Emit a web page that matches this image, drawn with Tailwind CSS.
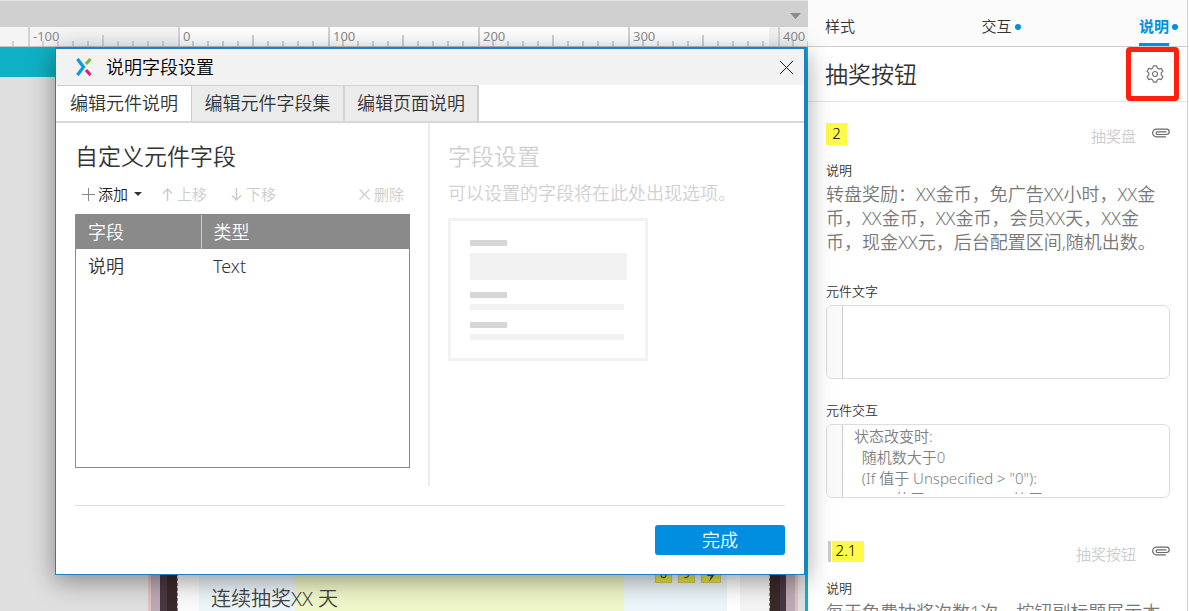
<!DOCTYPE html>
<html lang="zh-CN">
<head>
<meta charset="utf-8">
<title>说明字段设置</title>
<script src="https://cdn.jsdelivr.net/npm/@tailwindcss/browser@4"></script>
</head>
<body class="font-['Noto_Sans','Noto_Sans_CJK_SC',sans-serif] font-[350] text-[#333]">
<svg width="0" height="0" class="absolute">
  <defs>
    <g id="ticks" stroke="#d2d2d2" stroke-width="2">
      <path d="M1 0V19" />
      <path d="M15 14V19M30 14V19M45 14V19M60 14V19M75 8V19M90 14V19M105 14V19M120 14V19M135 14V19" />
    </g>
    <g id="clip" fill="none" stroke="#6a6a6a" stroke-width="1.2" stroke-linecap="round">
      <path d="M13.500 8.800H4.500a3.800 3.800 0 0 1 0-7.700h10a2.700 2.700 0 0 1 0 5.400H5.500a1.300 1.300 0 0 1 0-2.700H14" />
    </g>
  </defs>
</svg>
<div class="relative flex h-screen overflow-hidden bg-white">
  <!-- Workspace -->
  <main class="relative flex min-w-0 flex-1 flex-col">
    <div class="flex h-[27px] items-center justify-end border-t border-[#e4e4e4] bg-[#d0d0d0] pt-1 pr-[7px]">
      <button type="button" aria-label="更多页面" class="block"><svg width="11" height="6"><path d="M0 0H11L5.500 6Z" fill="#8a8a8a"/></svg></button>
    </div>
    <div class="flex h-5 overflow-hidden border-b border-[#c4c4c4] text-[13px] leading-[18px] font-normal text-[#8c8c8c]">
      <div class="relative -ml-[122px] w-[150px] shrink-0 bg-[#f4f4f4]"><svg class="block" width="150" height="19"><use href="#ticks"/></svg></div>
      <div class="relative w-[150px] shrink-0 bg-[#f4f4f4]"><svg class="block" width="150" height="19"><use href="#ticks"/></svg><span class="absolute top-0 left-[5px]">-100</span></div>
      <div class="relative w-[150px] shrink-0 bg-white"><svg class="block" width="150" height="19"><use href="#ticks"/></svg><span class="absolute top-0 left-[5px]">0</span></div>
      <div class="relative w-[150px] shrink-0 bg-white"><svg class="block" width="150" height="19"><use href="#ticks"/></svg><span class="absolute top-0 left-[5px]">100</span></div>
      <div class="relative w-[150px] shrink-0 bg-white"><svg class="block" width="150" height="19"><use href="#ticks"/></svg><span class="absolute top-0 left-[5px]">200</span></div>
      <div class="relative w-[150px] shrink-0 bg-linear-to-r from-white from-94% to-[#f2f2f2] to-94%"><svg class="block" width="150" height="19"><use href="#ticks"/></svg><span class="absolute top-0 left-[5px]">300</span></div>
      <div class="relative w-[150px] shrink-0 bg-[#f4f4f4]"><svg class="block" width="150" height="19"><use href="#ticks"/></svg><span class="absolute top-0 left-[5px]">400</span></div>
    </div>
    <div class="flex min-h-0 flex-1 flex-col border-r-[3px] border-[#10b0c4] bg-[#dfdfdf]">
      <div class="h-[30px] bg-[#10b0c4]"></div>
      <div class="flex min-h-0 flex-1">
        <div class="w-[148px]"></div>
        <div class="w-[3px] bg-[#e0c0c0]"></div>
        <div class="w-[9px] bg-[#bbaab3]"></div>
        <div class="w-[7px] bg-[#4a3840]"></div>
        <div class="w-[11px] border-r border-dashed border-[#10b0c4] bg-[#3a292d] bg-clip-padding"></div>
        <div class="w-[21px] bg-[#fbfbfb]"></div>
        <div class="flex flex-1 items-end bg-linear-to-r from-[#ecf5f9] from-[96px] to-[#f0f8c9] to-[96px] pl-3">
          <p class="text-[20px] leading-6 text-[#444]">连续抽奖XX 天</p>
        </div>
        <div class="flex w-[103px] items-end gap-[6px] bg-[#ecf5f9] pb-7 pl-[31px] text-[12px] leading-4 font-normal">
          <span class="w-[17px] border border-[#cfc860] bg-[#ece63c] text-center">8</span>
          <span class="w-[17px] border border-[#cfc860] bg-[#ece63c] text-center">9</span>
          <span class="flex h-[18px] w-5 items-end justify-center border border-[#cfc860] bg-[#ece63c]"><svg width="9" height="14"><path d="M5 0L0 8H4L2 14L9 5H5L7 0Z" fill="#444"/></svg></span>
        </div>
        <div class="w-[13px] bg-white"></div>
        <div class="w-[29px] bg-[#f4f4f4]"></div>
        <div class="w-[11px] border-l border-dashed border-[#10b0c4] bg-[#3a292d] bg-clip-padding"></div>
        <div class="w-[6px] bg-[#4a3840]"></div>
        <div class="w-[9px] bg-[#bbaab3]"></div>
        <div class="w-[3px] bg-[#e0c0c0]"></div>
        <div class="w-[7px]"></div>
      </div>
    </div>
  </main>

  <!-- Inspector -->
  <aside class="w-[381px] shrink-0 overflow-hidden pr-px"><div class="h-full border-r border-[#d0d0d0]">
    <nav class="flex h-[47px] items-stretch justify-between border-b border-[#ccc] bg-[#fbfbfb] pr-[9px] pl-[17px] text-[15px]">
      <button type="button" class="pt-[7px] pr-2">样式</button>
      <button type="button" class="flex items-center gap-[3px] pt-[7px]">交互<span class="size-[6px] rounded-full bg-[#008fe0]"></span></button>
      <button type="button" class="flex items-center gap-[3px] font-bold text-[#008fe0]"><span class="flex h-full items-center border-b-[3px] border-[#008fe0] pt-[10px]">说明</span><span class="mt-[7px] size-[6px] rounded-full bg-[#008fe0]"></span></button>
    </nav>
    <header class="flex h-[55px] items-center justify-between border-b border-[#e4e4e4] pr-2 pl-[17px]">
      <h2 class="text-[23px]">抽奖按钮</h2>
      <button type="button" aria-label="设置" class="flex h-[54px] w-[53px] items-center justify-center rounded border-[5px] border-[#ff2010] pl-1">
        <svg width="18" height="18" viewBox="0 0 18 18" fill="none" stroke="#777" stroke-width="1.200" stroke-linejoin="round"><path d="M7.300 .8h3.400l.5 2.300 1.700 1 2.300-.7 1.700 2.900-1.700 1.600v2.200l1.700 1.600-1.700 2.900-2.300-.7-1.700 1-.5 2.300H7.300l-.5-2.300-1.700-1-2.300 .7-1.700-2.900 1.700-1.600V7.900L1.100 6.300l1.700-2.900 2.300 .7 1.700-1z"/><circle cx="9" cy="9" r="2.500"/></svg>
      </button>
    </header>
    <section class="pt-[21px] pr-[17px] pl-[18px]">
      <div class="flex items-start justify-between">
        <span class="h-[22px] w-[21px] bg-[#fff94a] text-center text-[15px] leading-[20px] text-black">2</span>
        <div class="flex gap-4 text-[15px] leading-[26px] text-[#ccc]">抽奖盘<svg class="mt-[5px]" width="18" height="10"><use href="#clip"/></svg></div>
      </div>
      <h3 class="mt-[9px] text-[13px] leading-6">说明</h3>
      <p class="text-[18px] leading-6 text-[#777]">转盘奖励：XX金币，免广告XX小时，XX金币，XX金币，XX金币，会员XX天，XX金币，现金XX元，后台配置区间,随机出数。</p>
      <label for="f-text" class="mt-6 block text-[13px] leading-[26px]">元件文字</label>
      <div class="mt-px flex h-[74px] overflow-hidden rounded-[6px] border border-[#ddd]">
        <div class="w-4 border-r border-[#ccc] bg-[#fafafa]"></div>
        <textarea id="f-text" class="flex-1 resize-none overflow-hidden outline-none"></textarea>
      </div>
      <label for="f-act" class="mt-[18px] block text-[13px] leading-[26px]">元件交互</label>
      <div class="mt-px flex h-[74px] overflow-hidden rounded-[6px] border border-[#ddd] pb-[3px]">
        <div class="-mb-[3px] w-4 border-r border-[#ccc] bg-[#fafafa]"></div>
        <textarea id="f-act" class="flex-1 resize-none overflow-hidden pt-px pl-[11px] text-[15px] leading-[21px] text-[#808080] outline-none">状态改变时:
  随机数大于0
  (If 值于 Unspecified &gt; "0"):
    Set 值于 Unspecified(等于"[[Total"+"[[L]]"</textarea>
      </div>
    </section>
    <section class="mt-[43px] pr-[17px] pl-5">
      <div class="flex items-start justify-between">
        <span class="border-l-[3px] border-[#ccc] pl-px"><span class="block h-[21px] w-8 bg-[#fff94a] pr-1 text-center text-[15px] leading-[19px] text-black">2.1</span></span>
        <div class="flex gap-4 text-[15px] leading-[26px] text-[#ccc]">抽奖按钮<svg class="mt-[5px]" width="18" height="10"><use href="#clip"/></svg></div>
      </div>
      <h3 class="-ml-[2px] mt-[9px] text-[13px] leading-6">说明</h3>
      <p class="-ml-[2px] text-[18px] leading-6 text-[#777]">每天免费抽奖次数1次，按钮副标题展示本</p>
    </section>
  </div></aside>

  <!-- Dialog -->
  <div role="dialog" aria-labelledby="dlg-title" class="absolute top-[47px] right-[383px] left-[55px] flex h-[528px] flex-col border-t-2 border-r-2 border-b border-l border-[#1a80cc] bg-white shadow-[0_6px_24px_rgba(0,0,0,0.4)]">
    <div class="flex h-9 items-center justify-between bg-[#f2f2f2] pr-[11px] pl-5">
      <div class="flex items-center gap-[14px]">
        <svg width="16" height="18" viewBox="0 0 16 18" fill="none" stroke-width="3.200"><path d="M1.500 1L7.500 9L1.500 17" stroke="#0a9ce0"/><path d="M10 6L14.500 1" stroke="#74b843"/><path d="M10 12L14.500 17" stroke="#e5197f"/></svg>
        <h1 id="dlg-title" class="text-[18px] leading-6 text-black">说明字段设置</h1>
      </div>
      <button type="button" aria-label="关闭"><svg width="13" height="13" stroke="#222" stroke-width="1"><path d="M0 0L13 13M13 0L0 13"/></svg></button>
    </div>
    <div class="flex h-[38px] border-b-2 border-[#d8d8d8] pl-px text-[18px]">
      <button type="button" class="w-[135px] border-t border-r border-[#ccc] bg-white">编辑元件说明</button>
      <button type="button" class="w-[153px] border-t border-r-2 border-[#d4d4d4] bg-[#ebebeb]">编辑元件字段集</button>
      <button type="button" class="w-[134px] border-t border-r-2 border-[#d0d0d0] bg-[#ebebeb]">编辑页面说明</button>
    </div>
    <div class="flex h-[363px]">
      <section class="w-[374px] border-r-2 border-[#ececec] pr-[18px] pl-[19px]">
        <h2 class="mt-[15px] text-[23px] leading-9">自定义元件字段</h2>
        <div class="mt-[10px] flex h-5 items-center pr-[6px] pl-[6px] text-[15px] text-[#ccc]">
          <button type="button" class="flex items-center gap-[3px] text-[#222]"><svg width="14" height="14" stroke="#888"><path d="M7.500 1V14M1 7.500H14"/></svg>添加<svg class="ml-[3px]" width="8" height="4"><path d="M0 0H8L4 4Z" fill="#333"/></svg></button>
          <button type="button" disabled class="ml-5 flex items-center gap-1"><svg width="11" height="13" fill="none" stroke="#ccc" stroke-width="1.500"><path d="M5.500 13V1M1 5.500L5.500 1L10 5.500"/></svg>上移</button>
          <button type="button" disabled class="ml-6 flex items-center gap-1"><svg width="11" height="13" fill="none" stroke="#ccc" stroke-width="1.500"><path d="M5.500 0V12M1 7.500L5.500 12L10 7.500"/></svg>下移</button>
          <button type="button" disabled class="ml-auto flex items-center gap-1"><svg width="11" height="11" stroke="#ccc" stroke-width="1.200"><path d="M.5 .5L10.500 10.500M10.500 .5L.5 10.500"/></svg>删除</button>
        </div>
        <div class="mt-[10px] h-[254px] border border-[#8a8a8a]">
          <table class="w-full table-fixed border-collapse text-left text-[18px]">
            <thead class="bg-[#8a8a8a] text-white"><tr class="h-[34px]">
              <th class="w-[125px] border-r border-[#ccc] pl-3 font-[350]">字段</th><th class="pl-3 font-[350]">类型</th></tr></thead>
            <tbody><tr class="h-[35px]"><td class="pl-3">说明</td><td class="pl-3">Text</td></tr></tbody>
          </table>
        </div>
      </section>
      <section class="flex-1 pl-[18px] text-[#d0d0d0]">
        <h2 class="mt-[15px] text-[23px] leading-9">字段设置</h2>
        <p class="mt-[7px] text-[18px] leading-6">可以设置的字段将在此处出现选项。</p>
        <div class="mt-[13px] h-[143px] w-[200px] border-[3px] border-[#f2f2f2] pt-[19px] pl-[19px]">
          <div class="h-[6px] w-[37px] bg-[#d6d6d6]"></div>
          <div class="mt-[7px] h-[27px] w-[157px] bg-[#f2f2f2]"></div>
          <div class="mt-3 h-[6px] w-[37px] bg-[#d6d6d6]"></div>
          <div class="mt-[6px] h-[6px] w-[154px] bg-[#f2f2f2]"></div>
          <div class="mt-3 h-[6px] w-[37px] bg-[#d6d6d6]"></div>
          <div class="mt-[6px] h-[6px] w-[154px] bg-[#f2f2f2]"></div>
        </div>
      </section>
    </div>
    <footer class="mt-[19px] mr-[19px] ml-[19px] flex justify-end border-t border-[#e0e0e0] pt-[19px]">
      <button type="button" class="h-[30px] w-[130px] rounded-[3px] bg-[#008fe0] text-[18px] leading-[30px] text-white">完成</button>
    </footer>
  </div>
</div>
</body>
</html>
